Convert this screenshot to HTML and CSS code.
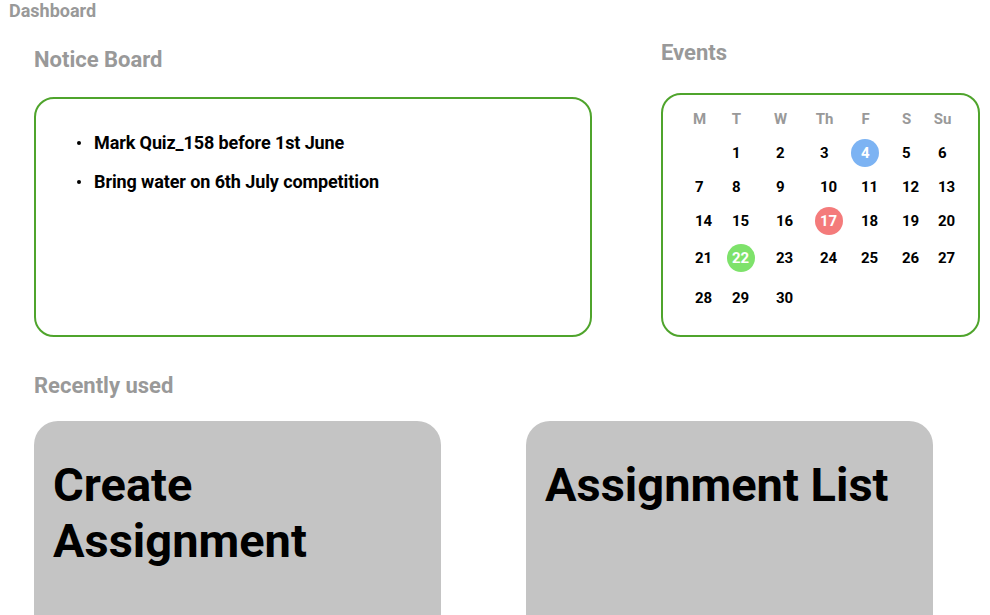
FILE: index.html
```html
<!DOCTYPE html>
<html>
<head>
<meta charset="utf-8">
<title>Dashboard</title>
<link rel="stylesheet" href="styles.css">
</head>
<body>
<div class="page">
  <div class="title">Dashboard</div>
  <div class="top">
    <section class="notice-col">
      <h2 class="heading">Notice Board</h2>
      <div class="box notice-box">
        <ul class="notices">
          <li>Mark Quiz_158 before 1st June</li>
          <li>Bring water on 6th July competition</li>
        </ul>
      </div>
    </section>
    <section class="events-col">
      <h2 class="heading">Events</h2>
      <div class="box cal-box">
        <div class="cal">
          <span class="dh">M</span><span class="dh">T</span><span class="dh">W</span><span class="dh">Th</span><span class="dh">F</span><span class="dh">S</span><span class="dh">Su</span>
          <span></span><span>1</span><span>2</span><span>3</span><span><span class="mark blue">4</span></span><span>5</span><span>6</span>
          <span>7</span><span>8</span><span>9</span><span>10</span><span>11</span><span>12</span><span>13</span>
          <span>14</span><span>15</span><span>16</span><span><span class="mark red">17</span></span><span>18</span><span>19</span><span>20</span>
          <span>21</span><span><span class="mark green">22</span></span><span>23</span><span>24</span><span>25</span><span>26</span><span>27</span>
          <span>28</span><span>29</span><span>30</span><span></span><span></span><span></span><span></span>
        </div>
      </div>
    </section>
  </div>
  <h2 class="heading recent-heading">Recently used</h2>
  <div class="cards">
    <div class="card">Create Assignment</div>
    <div class="card">Assignment List</div>
  </div>
</div>
</body>
</html>
```
FILE: styles.css
```css
html, body {
  margin: 0;
  padding: 0;
  background: #ffffff;
}
body {
  font-family: Roboto, "Liberation Sans", sans-serif;
  color: #000;
}
.page {
  width: 990px;
}
.title {
  font-size: 18px;
  font-weight: 700;
  color: #999999;
  padding-left: 9px;
  line-height: 21px;
}
.heading {
  margin: 0;
  font-size: 22px;
  font-weight: 700;
  color: #999999;
  line-height: 26px;
}
.top {
  display: flex;
  align-items: flex-start;
  padding-left: 34px;
  gap: 69px;
}
.notice-col {
  width: 558px;
  padding-top: 26px;
}
.notice-col .heading {
  margin-bottom: 24px;
}
.events-col {
  width: 319px;
  padding-top: 19px;
}
.events-col .heading {
  margin-bottom: 27px;
}
.box {
  border: 2px solid #4fa42c;
  border-radius: 20px;
  box-sizing: border-box;
}
.notice-box {
  height: 240px;
  padding-top: 33px;
}
.notices {
  margin: 0;
  padding-left: 58px;
  list-style: none;
  font-size: 18px;
  font-weight: 700;
  line-height: 21px;
  letter-spacing: -0.1px;
}
.notices li::before {
  content: "";
  display: inline-block;
  width: 4px;
  height: 4px;
  border-radius: 50%;
  background: #000;
  margin: 0 13px 0 -17px;
  vertical-align: 4px;
}
.notices li + li {
  margin-top: 18px;
}
.cal-box {
  height: 244px;
  padding: 7px 0 0 32px;
}
.cal {
  display: grid;
  grid-template-columns: 37px 44px 44px 41px 41px 36px 30px;
  grid-template-rows: repeat(4, 34px) 40px 39px;
  align-items: center;
  font-size: 15px;
  font-weight: 700;
  line-height: 18px;
}
.dh {
  color: #999999;
  width: 9px;
  display: flex;
  justify-content: center;
  white-space: nowrap;
}
.mark {
  position: relative;
  z-index: 0;
  color: #ffffff;
}
.mark::before {
  content: "";
  position: absolute;
  left: 50%;
  top: 50%;
  width: 28px;
  height: 28px;
  transform: translate(-50%, -50%);
  border-radius: 50%;
  z-index: -1;
}
.blue::before { background: #7cb3f3; }
.red::before { background: #f47b7b; }
.green::before { background: #7ee26b; }
.recent-heading {
  margin: 36px 0 22px 34px;
}
.cards {
  display: flex;
  gap: 85px;
  padding-left: 34px;
}
.card {
  width: 407px;
  height: 240px;
  box-sizing: border-box;
  background: #c4c4c4;
  border-radius: 24px;
  padding: 36px 19px 0 19px;
  font-size: 47px;
  font-weight: 700;
  line-height: 56px;
}
```
